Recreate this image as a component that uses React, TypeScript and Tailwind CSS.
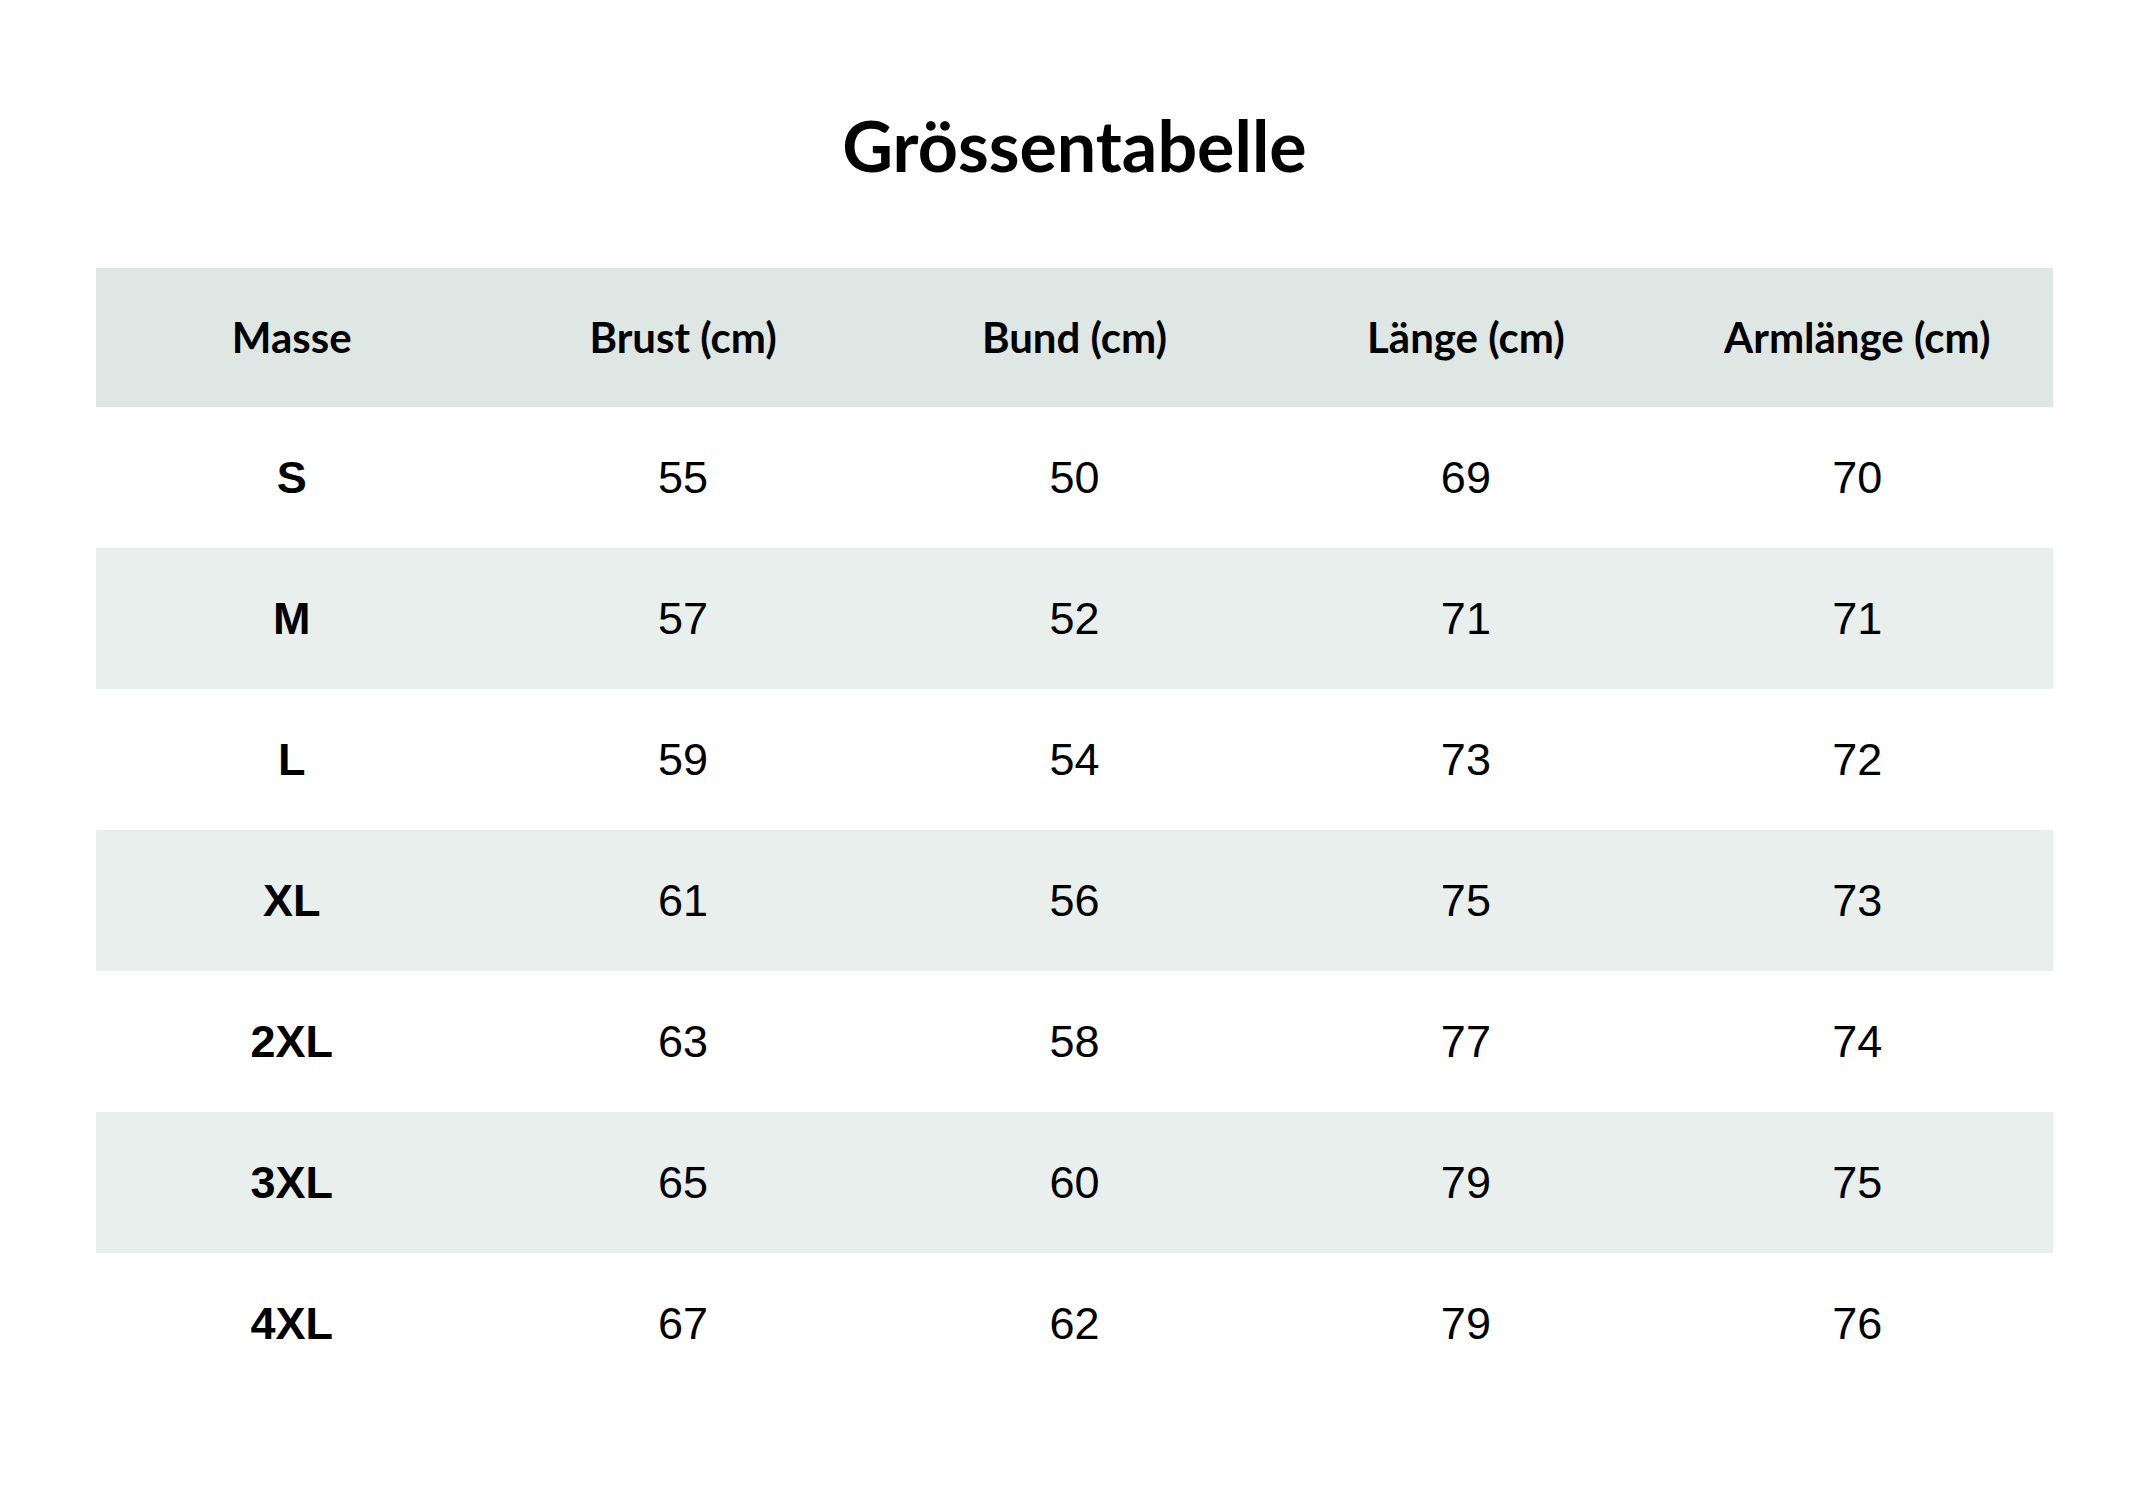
const headers = ['Masse', 'Brust (cm)', 'Bund (cm)', 'Länge (cm)', 'Armlänge (cm)']

const rows = [
  ['S', '55', '50', '69', '70'],
  ['M', '57', '52', '71', '71'],
  ['L', '59', '54', '73', '72'],
  ['XL', '61', '56', '75', '73'],
  ['2XL', '63', '58', '77', '74'],
  ['3XL', '65', '60', '79', '75'],
  ['4XL', '67', '62', '79', '76'],
]

export default function App() {
  return (
    <div className="min-h-screen w-full bg-white text-black">
      <div className="mx-auto w-[1957px] pt-[110px]">
        {/* Title */}
        <h1 className="text-center font-['Lato',sans-serif] font-bold text-[70px] leading-none">
          Grössentabelle
        </h1>

        {/* Table */}
        <div className="mt-[88px]">
          <div className="grid grid-cols-5 h-[139px] items-center bg-[#dfe7e4] font-['Lato',sans-serif] font-bold text-[42px]">
            {headers.map((h) => (
              <div key={h} className="text-center">
                {h}
              </div>
            ))}
          </div>

          {rows.map((row, i) => (
            <div
              key={row[0]}
              className={
                i % 2 === 1
                  ? 'grid grid-cols-5 h-[141px] items-center bg-[#e9efec] font-["Liberation_Sans",Arial,sans-serif] text-[45px]'
                  : 'grid grid-cols-5 h-[141px] items-center bg-white font-["Liberation_Sans",Arial,sans-serif] text-[45px]'
              }
            >
              {row.map((cell, j) => (
                <div key={j} className={j === 0 ? 'text-center font-bold' : 'text-center'}>
                  {cell}
                </div>
              ))}
            </div>
          ))}
        </div>
      </div>
    </div>
  )
}
